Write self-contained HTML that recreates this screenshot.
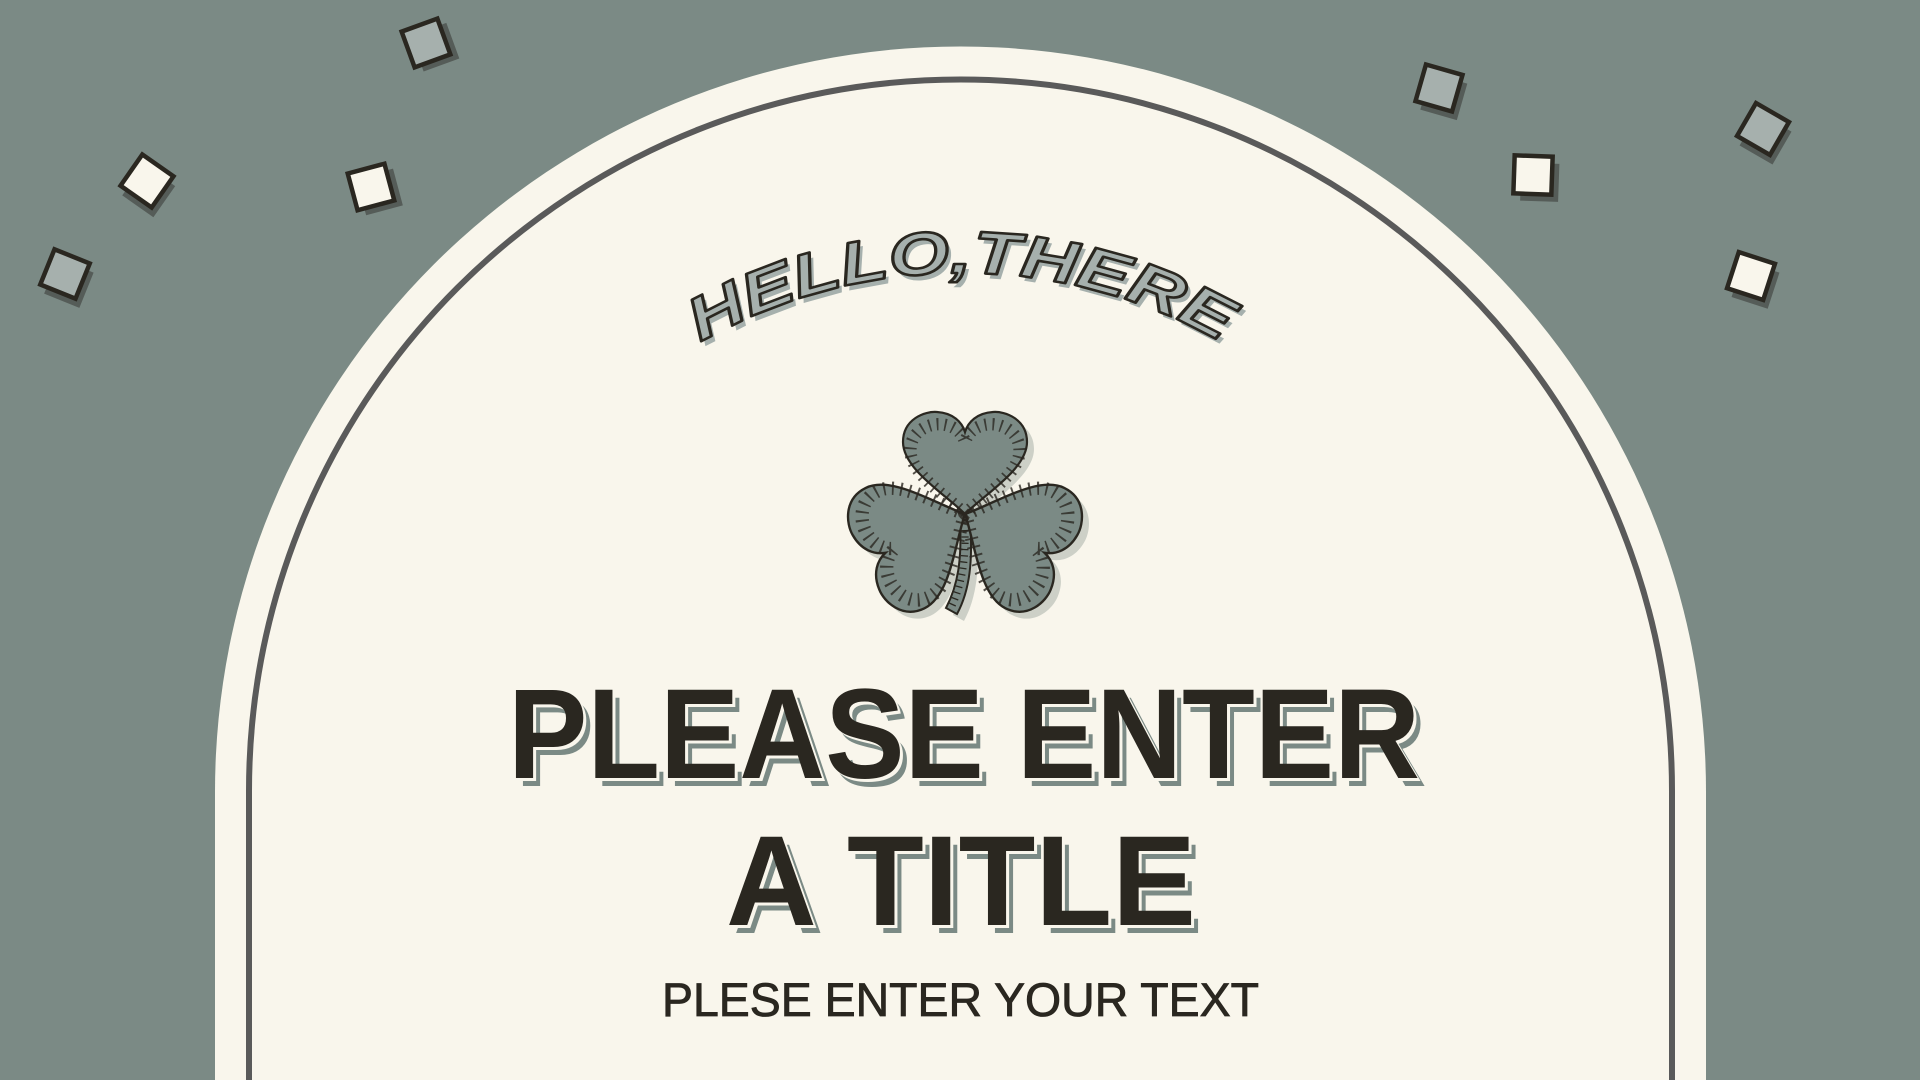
<!DOCTYPE html>
<html><head><meta charset="utf-8"><style>
html,body{margin:0;padding:0;width:1920px;height:1080px;overflow:hidden;background:#7b8a85}
svg{display:block}
</style></head><body>
<svg width="1920" height="1080" viewBox="0 0 1920 1080" xmlns="http://www.w3.org/2000/svg">
<defs>
<path id="heart" d="M0,0 C-20,-20 -62,-45 -62,-72 C-62,-95 -40,-103 -28,-102 C-12,-101 -3,-92 0,-82 C3,-92 12,-101 28,-102 C40,-103 62,-95 62,-72 C62,-45 20,-20 0,0 Z"/>
<g id="lobe">
<use href="#heart" fill="#7b8a85" stroke="#2a2720" stroke-width="2.2"/>
<use href="#heart" transform="scale(0.88)" fill="none" stroke="#2a2720" stroke-width="14" stroke-dasharray="2 7" opacity="0.8"/>
</g>
<path id="arc" d="M438,796 A523,523 0 0 1 1484,796"/>
</defs>
<rect width="1920" height="1080" fill="#7b8a85"/>
<path d="M215,1080 L215,792 A745.5,745.5 0 0 1 1706,792 L1706,1080 Z" fill="#f9f6ec"/>
<path d="M249,1085 L249,791 A711.5,711.5 0 0 1 1672,791 L1672,1085" fill="none" stroke="#5a5a5a" stroke-width="6"/>
<g stroke="#2a2720" stroke-width="4.5">
<g transform="translate(426,43) rotate(-20)"><rect x="-12" y="-12" width="38" height="38" fill="#555c58" stroke="none"/><rect x="-19" y="-19" width="38" height="38" fill="#a6b0ad"/></g>
<g transform="translate(147,181) rotate(35)"><rect x="-12" y="-12" width="38" height="38" fill="#555c58" stroke="none"/><rect x="-19" y="-19" width="38" height="38" fill="#f9f6ec"/></g>
<g transform="translate(371,187) rotate(-15)"><rect x="-12" y="-12" width="38" height="38" fill="#555c58" stroke="none"/><rect x="-19" y="-19" width="38" height="38" fill="#f9f6ec"/></g>
<g transform="translate(65,274) rotate(22)"><rect x="-12" y="-12" width="38" height="38" fill="#555c58" stroke="none"/><rect x="-19" y="-19" width="38" height="38" fill="#a6b0ad"/></g>
<g transform="translate(1439,88) rotate(16)"><rect x="-12" y="-12" width="38" height="38" fill="#555c58" stroke="none"/><rect x="-19" y="-19" width="38" height="38" fill="#a6b0ad"/></g>
<g transform="translate(1533,175) rotate(2)"><rect x="-12" y="-12" width="38" height="38" fill="#555c58" stroke="none"/><rect x="-19" y="-19" width="38" height="38" fill="#f9f6ec"/></g>
<g transform="translate(1763,129) rotate(30)"><rect x="-12" y="-12" width="38" height="38" fill="#555c58" stroke="none"/><rect x="-19" y="-19" width="38" height="38" fill="#a6b0ad"/></g>
<g transform="translate(1751,276) rotate(18)"><rect x="-12" y="-12" width="38" height="38" fill="#555c58" stroke="none"/><rect x="-19" y="-19" width="38" height="38" fill="#f9f6ec"/></g>
</g>
<g font-family="Liberation Sans Narrow, Liberation Sans, sans-serif" font-weight="bold" font-size="60" font-style="italic">
<text fill="#a6b0ad" transform="translate(4,5)"><textPath href="#arc" startOffset="50%" text-anchor="middle" textLength="545" lengthAdjust="spacingAndGlyphs">HELLO,THERE</textPath></text>
<text fill="#a6b0ad" stroke="#2a2720" stroke-width="2.6" stroke-linejoin="round"><textPath href="#arc" startOffset="50%" text-anchor="middle" textLength="545" lengthAdjust="spacingAndGlyphs">HELLO,THERE</textPath></text>
</g>
<g transform="translate(7,7)" fill="#cdd0c7">
<use href="#heart" transform="translate(965,514)"/>
<use href="#heart" transform="translate(965,514) rotate(-116) scale(1.08)"/>
<use href="#heart" transform="translate(965,514) rotate(116) scale(1.08)"/>
<path d="M960,520 C962,560 958,585 946,608 L957,614 C970,590 973,560 970,520 Z"/>
</g>
<path d="M960,520 C962,560 958,585 946,608 L957,614 C970,590 973,560 970,520 Z" fill="#7b8a85" stroke="#2a2720" stroke-width="2"/>
<path d="M965,530 C966,560 962,585 951,608" fill="none" stroke="#2a2720" stroke-width="7" stroke-dasharray="1.3 5"/>
<use href="#lobe" transform="translate(965,514) rotate(-116) scale(1.08)"/>
<use href="#lobe" transform="translate(965,514) rotate(116) scale(1.08)"/>
<use href="#lobe" transform="translate(965,514)"/>
<g font-family="Liberation Sans Narrow, Liberation Sans, sans-serif" font-weight="bold" font-size="128">
<text x="515" y="786" fill="#7b8a85" textLength="912" lengthAdjust="spacingAndGlyphs">PLEASE ENTER</text>
<text x="511" y="781" fill="#f9f6ec" textLength="912" lengthAdjust="spacingAndGlyphs">PLEASE ENTER</text>
<text x="508" y="778" fill="#2a2720" textLength="912" lengthAdjust="spacingAndGlyphs">PLEASE ENTER</text>
<text x="733" y="933" fill="#7b8a85" textLength="470" lengthAdjust="spacingAndGlyphs">A TITLE</text>
<text x="729" y="928" fill="#f9f6ec" textLength="470" lengthAdjust="spacingAndGlyphs">A TITLE</text>
<text x="726" y="925" fill="#2a2720" textLength="470" lengthAdjust="spacingAndGlyphs">A TITLE</text>
</g>
<text x="662" y="1016" font-family="Liberation Sans Narrow, Liberation Sans, sans-serif" font-size="47" fill="#2a2720" stroke="#2a2720" stroke-width="0.8" textLength="597" lengthAdjust="spacingAndGlyphs">PLESE ENTER YOUR TEXT</text>
</svg>
</body></html>
